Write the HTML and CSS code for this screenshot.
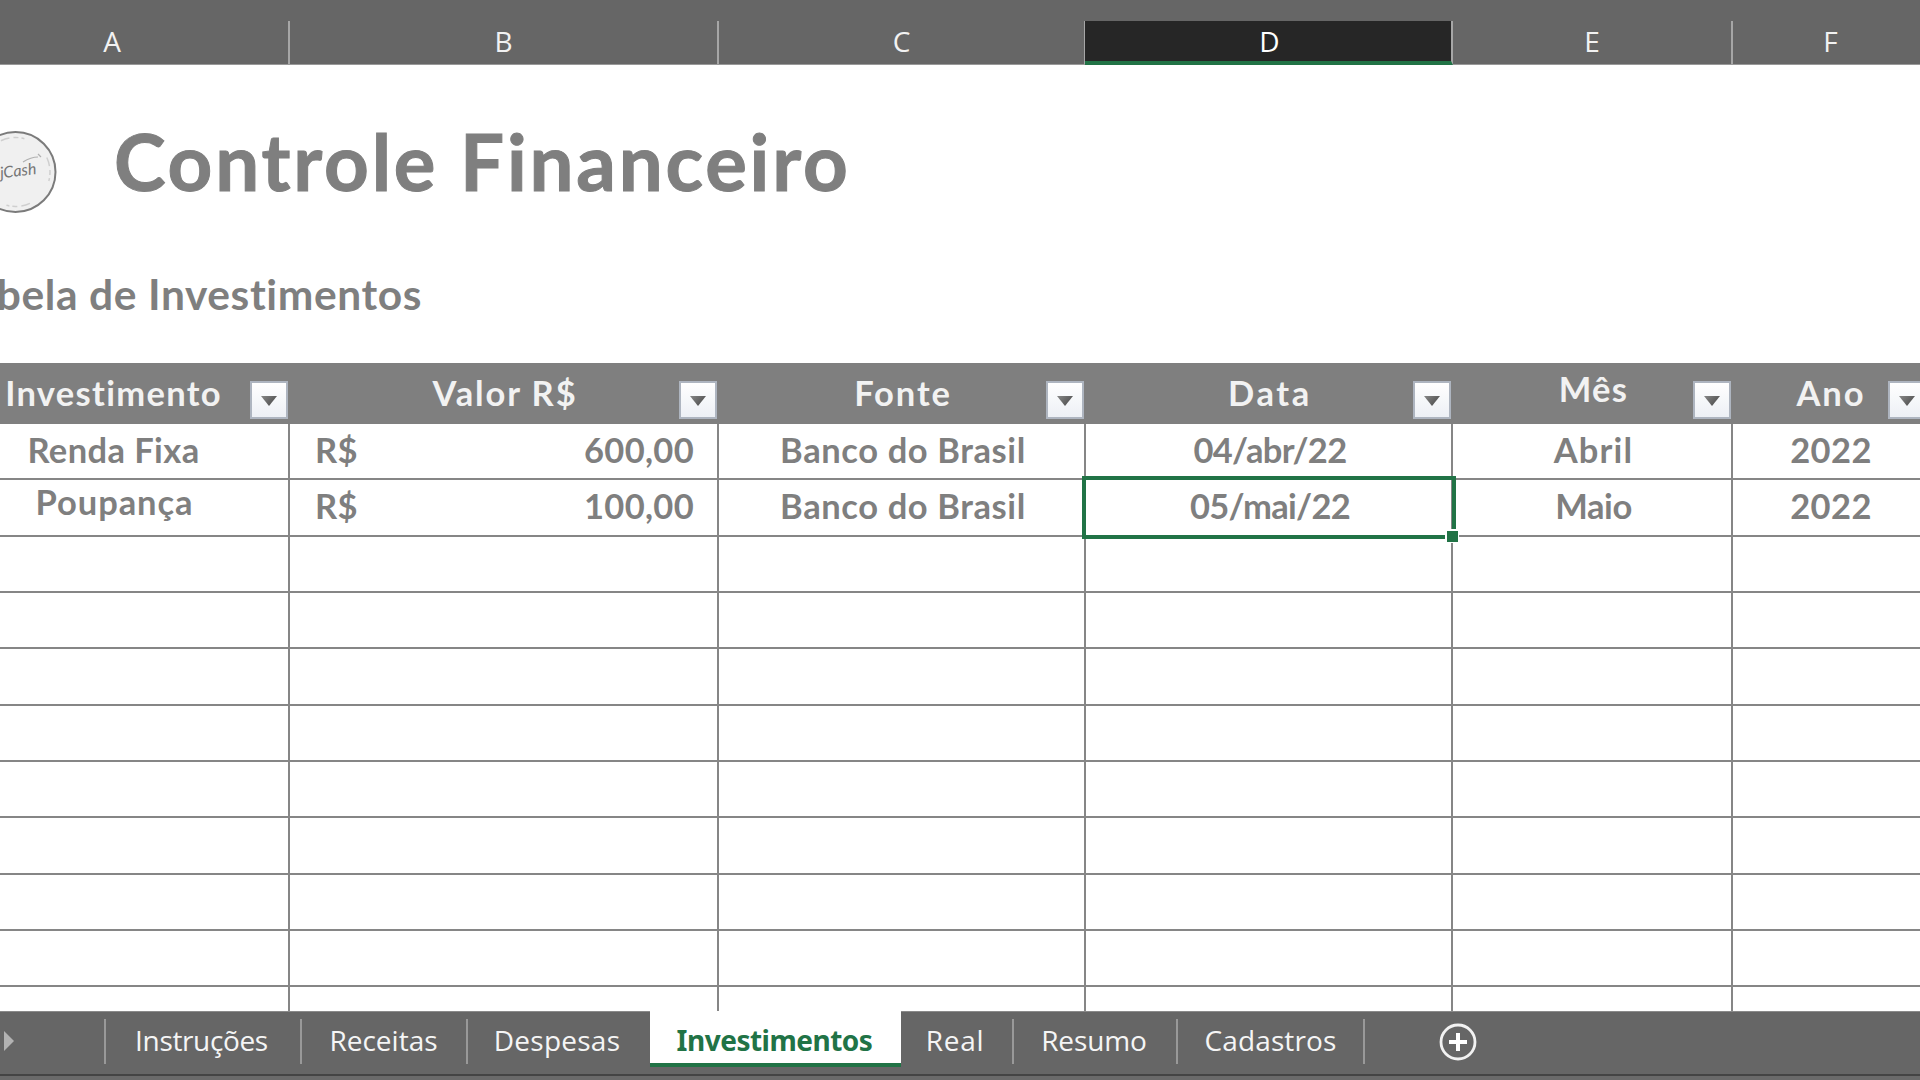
FILE: index.html
```
<!DOCTYPE html>
<html lang="pt-BR">
<head>
<meta charset="utf-8">
<title>Controle Financeiro</title>
<link rel="stylesheet" href="styles.css">
</head>
<body>
<div class="app">
  <div class="columns">
    <div class="letter">A</div><div class="letter">B</div><div class="letter">C</div><div class="letter current">D</div><div class="letter">E</div><div class="letter last">F</div>
  </div>

  <main class="sheet">
    <header class="banner">
      <svg class="logo" width="57" height="84" viewBox="0 0 57 84">
        <circle cx="15.5" cy="42" r="40" fill="#f0f0f0" stroke="#7b7b7b" stroke-width="2"/>
        <circle cx="15.5" cy="42" r="34.5" fill="none" stroke="#cfcfcf" stroke-width="1.5" stroke-dasharray="9 4 5 3 3 30.2" transform="rotate(-115 15.5 42)"/>
        <path d="M23 32q8-5 15-5M38 24l3 3" fill="none" stroke="#b0b0b0" stroke-width="1.2"/>
        <text class="logo-text" x="0" y="46" transform="rotate(-7 20 42)">jCash</text>
      </svg>
      <h1 class="title">Controle Financeiro</h1>
    </header>
    <h2 class="subtitle">bela de Investimentos</h2>

    <div class="row head">
      <div class="cell wide">Investimento<i class="filter"></i></div>
      <div class="cell wider">Valor R$<i class="filter"></i></div>
      <div class="cell wider">Fonte<i class="filter"></i></div>
      <div class="cell widest">Data<i class="filter"></i></div>
      <div class="cell wide raised-head">Mês<i class="filter"></i></div>
      <div class="cell wider">Ano<i class="filter"></i></div>
    </div>
    <div class="row">
      <div class="cell name">Renda Fixa</div>
      <div class="cell money"><span>R$</span><span>600,00</span></div>
      <div class="cell bank">Banco do Brasil</div>
      <div class="cell date">04/abr/22</div>
      <div class="cell wide">Abril</div>
      <div class="cell year">2022</div>
    </div>
    <div class="row">
      <div class="cell raised">Poupança</div>
      <div class="cell money"><span>R$</span><span>100,00</span></div>
      <div class="cell bank">Banco do Brasil</div>
      <div class="cell date selected">05/mai/22<i class="outline"></i><i class="handle"></i></div>
      <div class="cell month">Maio</div>
      <div class="cell year">2022</div>
    </div>
    <div class="row"><div class="cell"></div><div class="cell"></div><div class="cell"></div><div class="cell"></div><div class="cell"></div><div class="cell"></div></div>
    <div class="row"><div class="cell"></div><div class="cell"></div><div class="cell"></div><div class="cell"></div><div class="cell"></div><div class="cell"></div></div>
    <div class="row"><div class="cell"></div><div class="cell"></div><div class="cell"></div><div class="cell"></div><div class="cell"></div><div class="cell"></div></div>
    <div class="row"><div class="cell"></div><div class="cell"></div><div class="cell"></div><div class="cell"></div><div class="cell"></div><div class="cell"></div></div>
    <div class="row"><div class="cell"></div><div class="cell"></div><div class="cell"></div><div class="cell"></div><div class="cell"></div><div class="cell"></div></div>
    <div class="row"><div class="cell"></div><div class="cell"></div><div class="cell"></div><div class="cell"></div><div class="cell"></div><div class="cell"></div></div>
    <div class="row"><div class="cell"></div><div class="cell"></div><div class="cell"></div><div class="cell"></div><div class="cell"></div><div class="cell"></div></div>
    <div class="row"><div class="cell"></div><div class="cell"></div><div class="cell"></div><div class="cell"></div><div class="cell"></div><div class="cell"></div></div>
    <div class="row"><div class="cell"></div><div class="cell"></div><div class="cell"></div><div class="cell"></div><div class="cell"></div><div class="cell"></div></div>
    <div class="row"><div class="cell"></div><div class="cell"></div><div class="cell"></div><div class="cell"></div><div class="cell"></div><div class="cell"></div></div>
  </main>

  <nav class="tabs">
    <div class="scroller"><svg width="14" height="20" viewBox="0 0 14 20"><path d="M4 0v20l10-10z" fill="#b3b3b3"/></svg></div>
    <div class="tab t-instr">Instruções</div>
    <div class="tab t-rec">Receitas</div>
    <div class="tab t-desp">Despesas</div>
    <div class="tab active">Investimentos</div>
    <div class="tab t-real">Real</div>
    <div class="tab t-res">Resumo</div>
    <div class="tab t-cad">Cadastros</div>
    <svg class="add" width="38" height="38" viewBox="0 0 38 38"><circle cx="19" cy="19" r="17" fill="none" stroke="#f2f2f2" stroke-width="2.8"/><path d="M19 10v18M10 19h18" stroke="#fff" stroke-width="4"/></svg>
  </nav>
</div>
</body>
</html>
```
FILE: styles.css
```
* { box-sizing: border-box; }
body { margin: 0; }

.app {
  width: 1920px;
  height: 1080px;
  overflow: hidden;
  display: flex;
  flex-direction: column;
  background: #fff;
  font-family: Lato, "Liberation Sans", sans-serif;
  font-variant-ligatures: none;
  color: #7f7f7f;
}

/* column letters */
.columns,
.row {
  display: grid;
  grid-template-columns: 354px 429px 367px 367px 280px 195px;
  width: 1992px;
  margin-left: -64px;
  flex: none;
}
.columns {
  height: 65px;
  padding-top: 21px;
  background: #666;
  border-bottom: 1px solid #999;
}
.letter {
  height: 43px;
  border-right: 2px solid #a6a6a6;
  font: 400 28px/41px "Open Sans", sans-serif;
  color: #f2f2f2;
  text-align: center;
}
.letter.current {
  height: 44px;
  margin-left: -1px;
  padding-left: 3px;
  background: #262626;
  border-bottom: 4px solid #217346;
  color: #fff;
}
.letter.last { border-right: 0; }

/* sheet */
.sheet { height: 946px; overflow: hidden; flex: none; }
.banner {
  display: flex;
  align-items: center;
  height: 188px;
  padding-top: 25px;
}
.logo { flex: none; }
.logo-text { font: italic 400 16px Lato, sans-serif; fill: #757575; }
.title {
  margin: 0 0 22px 57px;
  font-size: 78px;
  line-height: 96px;
  font-weight: 700;
  letter-spacing: 2.8px;
  -webkit-text-stroke: 1px #7f7f7f;
}
.subtitle {
  display: flex;
  justify-content: flex-end;
  width: 422px;
  height: 110px;
  margin: 0;
  padding-top: 15px;
  font-size: 42.5px;
  line-height: 52px;
  font-weight: 700;
  letter-spacing: 0.6px;
  white-space: nowrap;
}

.cell {
  position: relative;
  display: flex;
  align-items: center;
  justify-content: center;
  height: 56.33px;
  padding-bottom: 2px;
  padding-left: 3px;
  border-right: 2px solid #868686;
  border-bottom: 2px solid #868686;
  font-size: 34.5px;
  line-height: 42px;
  font-weight: 700;
  white-space: nowrap;
}
.head { background: #7f7f7f; }
.head .cell {
  height: 61px;
  padding-bottom: 0;
  padding-top: 1px;
  border-color: transparent;
  color: #f2f2f2;
}
.wide { letter-spacing: 1.2px; }
.wider { letter-spacing: 1.9px; }
.widest { letter-spacing: 2.6px; }
.name { letter-spacing: 0.4px; }
.bank { letter-spacing: 0.6px; }
.date { letter-spacing: -0.7px; }
.month { letter-spacing: -0.4px; }
.year { letter-spacing: 0.4px; }
.raised { padding-bottom: 11px; padding-left: 5px; letter-spacing: 0.9px; }
.head .wide { letter-spacing: 1.3px; }
.head .raised-head { padding-bottom: 8px; }
.money { justify-content: space-between; padding-left: 25px; padding-right: 23px; letter-spacing: 0.3px; }

.filter {
  position: absolute;
  right: 0;
  top: 18px;
  width: 38px;
  height: 38px;
  border: 2px solid #aeb5c0;
  background: linear-gradient(#fff, #edf0f5);
}
.filter::after {
  content: "";
  position: absolute;
  left: 9px;
  top: 13px;
  width: 16px;
  height: 10px;
  background: linear-gradient(135deg, #888, #444);
  clip-path: polygon(0 0, 100% 0, 50% 100%);
}

.outline {
  position: absolute;
  left: -4px;
  top: -4px;
  right: -5px;
  bottom: -4px;
  border: 4px solid #217346;
}
.handle {
  position: absolute;
  right: -8px;
  bottom: -8px;
  width: 14px;
  height: 14px;
  background: #217346;
  border: 2px solid #fff;
  border-width: 2px 1px 1px 2px;
}
.selected { z-index: 1; }

/* sheet tabs */
.tabs {
  display: flex;
  align-items: flex-start;
  height: 69px;
  flex: none;
  background: linear-gradient(#666, #666) 0 0 / 100% 63px no-repeat, linear-gradient(#444, #444) 0 63px / 100% 2px no-repeat, #6a6a6a;
  box-shadow: inset 0 1px #8a8a8a;
  font-family: "Open Sans", sans-serif;
}
.scroller {
  width: 106px;
  height: 45px;
  margin-top: 8px;
  padding-top: 12px;
  border-right: 2px solid #999;
}
.scroller svg { display: block; }
.tab {
  height: 45px;
  margin-top: 8px;
  border-right: 2px solid #999;
  font-size: 28px;
  line-height: 42px;
  color: #f5f5f5;
  text-align: center;
}
.t-instr { width: 196px; letter-spacing: -0.35px; padding-right: 3px; }
.t-rec { width: 166px; padding-right: 1px; }
.t-desp { width: 182px; border: 0; letter-spacing: 0.25px; padding-right: 4px; }
.tab.active {
  width: 251px;
  height: 56px;
  margin-top: 0;
  padding-top: 8px;
  padding-right: 2px;
  background: #fff;
  border-right: 0;
  border-bottom: 4px solid #217346;
  font-family: "Noto Sans", sans-serif;
  font-weight: 700;
  letter-spacing: -0.5px;
  color: #217346;
}
.t-real { width: 113px; letter-spacing: 0.7px; padding-right: 3px; }
.t-res { width: 164px; padding-right: 2px; letter-spacing: -0.1px; }
.t-cad { width: 187px; letter-spacing: 0.15px; }
.add { margin: 12px 0 0 74px; }
```
